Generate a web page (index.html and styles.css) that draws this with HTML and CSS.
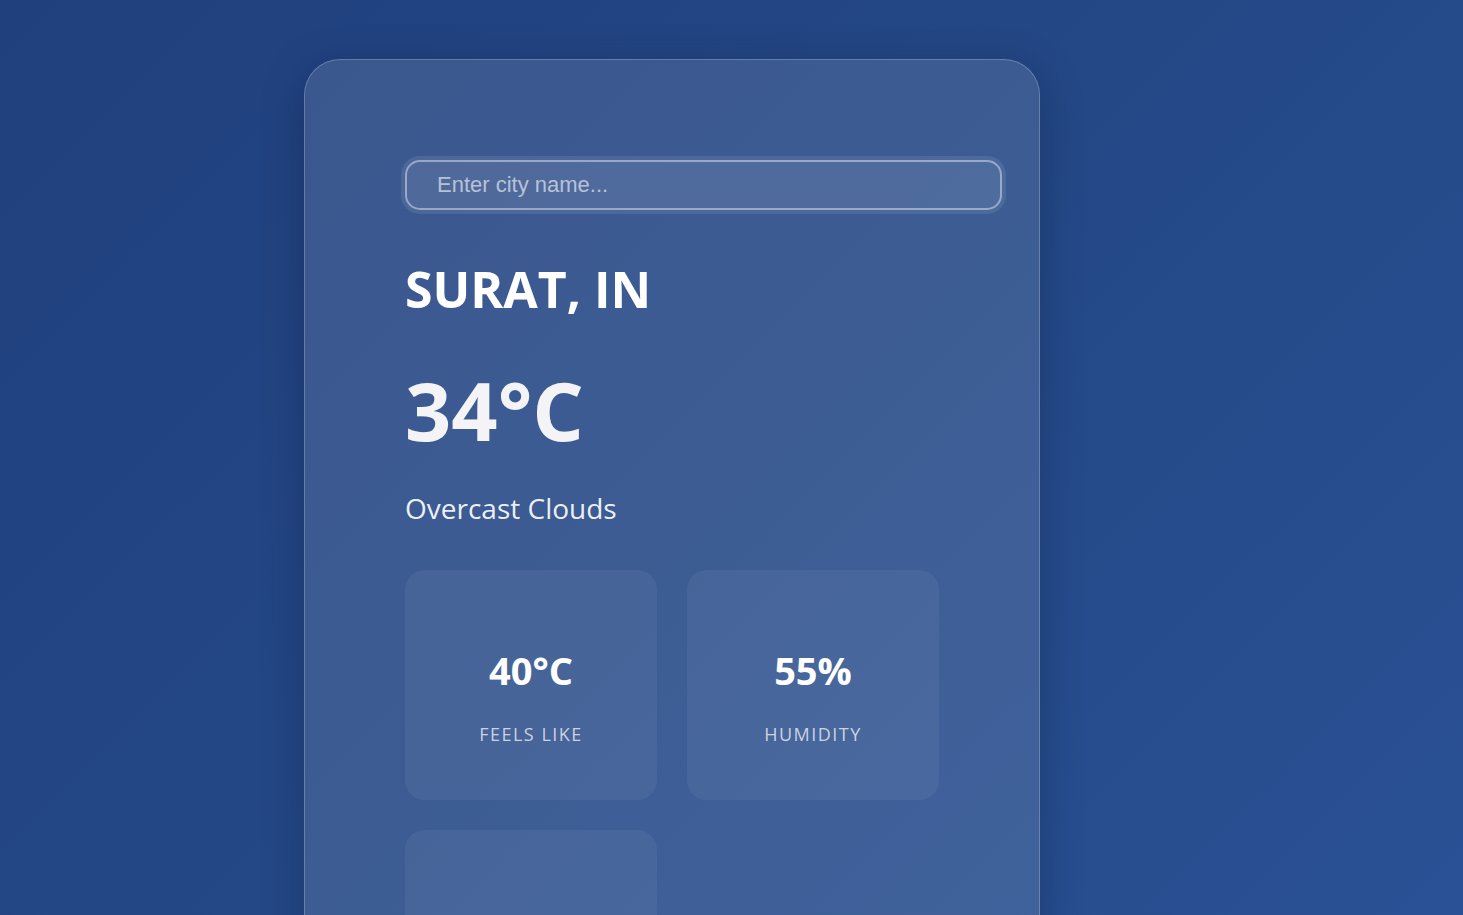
FILE: index.html
```html
<!DOCTYPE html>
<html lang="en">
<head>
<meta charset="utf-8">
<title>Weather</title>
<link rel="stylesheet" href="styles.css">
</head>
<body>
<div class="page">
  <main class="card">
    <div class="search">
      <input class="search-input" type="text" placeholder="Enter city name..." autofocus>
    </div>
    <h1 class="city">SURAT, IN</h1>
    <div class="temp">34°C</div>
    <p class="desc">Overcast Clouds</p>
    <div class="stats">
      <div class="stat">
        <div class="stat-value">40°C</div>
        <div class="stat-label">FEELS LIKE</div>
      </div>
      <div class="stat">
        <div class="stat-value">55%</div>
        <div class="stat-label">HUMIDITY</div>
      </div>
      <div class="stat"></div>
    </div>
  </main>
</div>
</body>
</html>
```

FILE: styles.css
```css
html, body {
  margin: 0;
  padding: 0;
  height: 100%;
  overflow: hidden;
}
body {
  background: linear-gradient(135deg, #203f7d 0%, #244886 50%, #2a5195 100%);
  font-family: "Open Sans", "Noto Sans", sans-serif;
  color: #fff;
}
.page {
  padding: 59px 0 0 304px;
}
.card {
  box-sizing: border-box;
  width: 736px;
  min-height: 1000px;
  padding: 100px 38px 0 100px;
  border-radius: 36px;
  border: 1px solid rgba(255, 255, 255, 0.22);
  background: rgba(255, 255, 255, 0.115);
  box-shadow: 0 10px 40px rgba(10, 25, 60, 0.35);
}
.search-input {
  box-sizing: border-box;
  display: block;
  width: 597px;
  height: 50px;
  padding: 0 0 0 30px;
  border: 2px solid rgba(255, 255, 255, 0.42);
  border-radius: 15px;
  background: rgba(255, 255, 255, 0.1);
  box-shadow: 0 0 0 4px rgba(255, 255, 255, 0.09);
  font-family: "Liberation Sans", Arial, sans-serif;
  font-size: 22px;
  color: #fff;
  outline: none;
  caret-color: #fff;
}
.search-input::placeholder {
  color: rgba(255, 255, 255, 0.6);
}
.city {
  margin: 54px 0 0;
  font-size: 50px;
  line-height: 1;
  font-weight: 700;
}
.temp {
  margin: 55px 0 0;
  font-size: 81px;
  line-height: 1;
  font-weight: 700;
  color: #f4f4f6;
}
.desc {
  margin: 44px 0 0;
  font-size: 28px;
  line-height: 1;
  font-weight: 400;
  color: rgba(255, 255, 255, 0.92);
}
.stats {
  margin-top: 48px;
  display: grid;
  grid-template-columns: repeat(2, 252px);
  gap: 30px;
}
.stat {
  box-sizing: border-box;
  height: 230px;
  padding-top: 81px;
  border-radius: 20px;
  background: rgba(255, 255, 255, 0.055);
  text-align: center;
}
.stat-value {
  font-size: 38px;
  line-height: 1;
  font-weight: 700;
}
.stat-label {
  margin-top: 36px;
  font-size: 18px;
  line-height: 1;
  letter-spacing: 1.5px;
  color: rgba(255, 255, 255, 0.72);
}
```
